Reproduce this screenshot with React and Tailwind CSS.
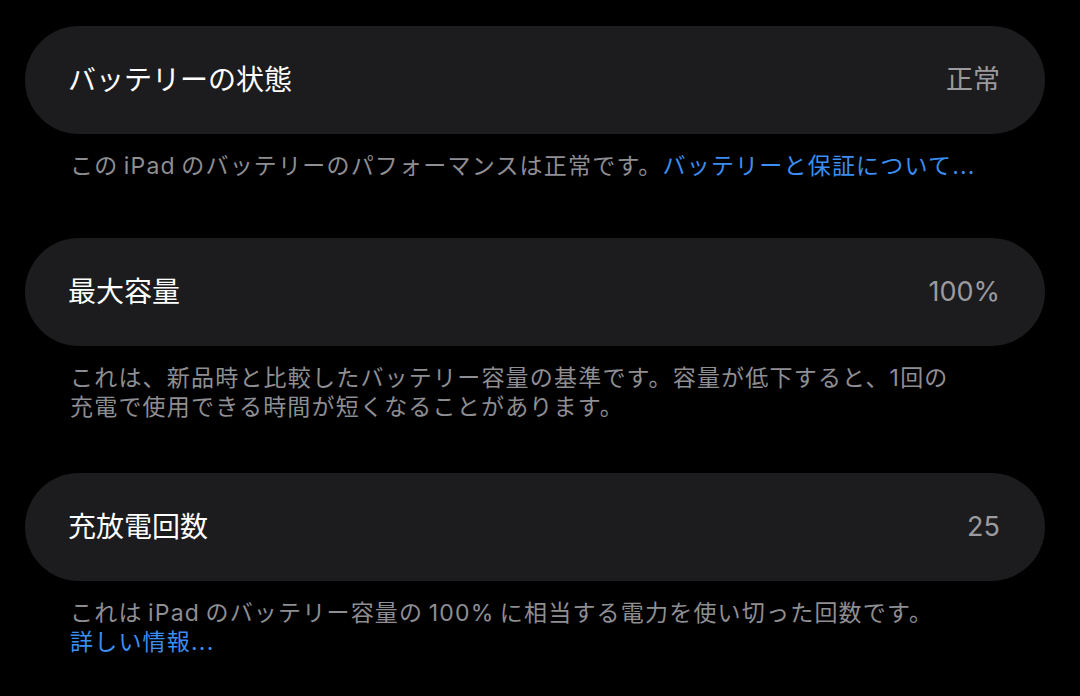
const font = { fontFamily: 'Inter, "Noto Sans CJK JP", sans-serif' };

const sections = [
    {
        title: 'バッテリーの状態',
        value: '正常',
        foot: (
            <>
                この{'\u2009'}iPad{'\u2009'}のバッテリーのパフォーマンスは正常です。
                <span className="text-[#3b8ef3]">バッテリーと保証について...</span>
            </>
        ),
        gap: 'mb-[57px]',
    },
    {
        title: '最大容量',
        value: '100%',
        foot: (
            <>
                これは、新品時と比較したバッテリー容量の基準です。容量が低下すると、1回の
                <br />
                充電で使用できる時間が短くなることがあります。
            </>
        ),
        gap: 'mb-[51px]',
    },
    {
        title: '充放電回数',
        value: '25',
        foot: (
            <>
                これは{'\u2009'}iPad{'\u2009'}のバッテリー容量の{'\u2009'}100%{'\u2009'}に相当する電力を使い切った回数です。
                <br />
                <span className="text-[#3b8ef3]">詳しい情報...</span>
            </>
        ),
        gap: '',
    },
];

export default function App() {
    return (
        <div className="min-h-[696px] w-[1080px] bg-black pt-[26px]" style={font}>
            {sections.map((s) => (
                <div key={s.title} className={`ml-[25px] w-[1020px] ${s.gap}`}>
                    <div className="flex h-[108px] items-center justify-between rounded-full bg-[#1c1c1e] pl-[43px] pr-[45px]">
                        <span className="text-[28px] text-white">{s.title}</span>
                        <span className="text-[27px] text-[#9a9a9f]">{s.value}</span>
                    </div>
                    <p className="pl-[45px] pt-[18px] text-[23px] leading-[29px] tracking-[1.2px] text-[#8e8e93]">{s.foot}</p>
                </div>
            ))}
        </div>
    );
}
